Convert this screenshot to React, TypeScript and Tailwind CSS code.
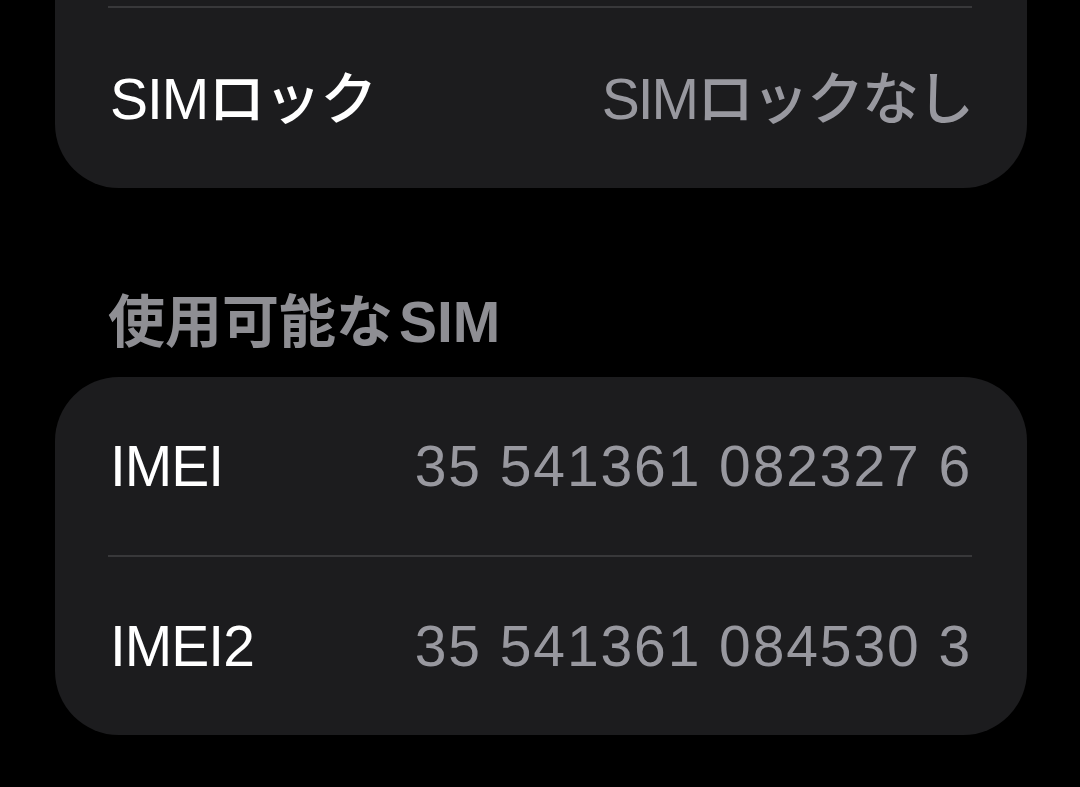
import React from "react";

const font = {
  fontFamily: '"Liberation Sans", "Noto Sans CJK JP", sans-serif',
};

function Row({
  label,
  value,
  numeric = false,
}: {
  label: string;
  value: string;
  numeric?: boolean;
}) {
  return (
    <div className="flex h-[178px] items-center justify-between pl-[55px] pr-[55px]">
      <span className="text-[57px] font-medium leading-none tracking-[-1px] text-white">
        {label}
      </span>
      <span
        className={
          numeric
            ? "text-[57px] leading-none tracking-[1.9px] text-[#98989f]"
            : "text-[57px] font-medium leading-none tracking-[-2px] text-[#98989f]"
        }
      >
        {value}
      </span>
    </div>
  );
}

function Divider() {
  return <div className="ml-[53px] mr-[55px] h-[2px] bg-[#38383a]" />;
}

export default function App() {
  return (
    <div
      className="h-[787px] w-[1080px] overflow-hidden bg-black pl-[55px] pr-[53px]"
      style={font}
    >
      <div className="-mt-[172px] rounded-[64px] bg-[#1c1c1e]">
        <div className="h-[178px]" />
        <Divider />
        <div className="pt-[2px]">
          <Row label="SIMロック" value="SIMロックなし" />
        </div>
      </div>

      <div className="mt-[100px] flex h-[68px] items-center pl-[53px]">
        <span className="text-[57px] font-bold leading-none text-[#8e8e93]">
          使用可能な<span className="ml-[6px]">SIM</span>
        </span>
      </div>

      <div className="mt-[21px] rounded-[64px] bg-[#1c1c1e]">
        <Row label="IMEI" value="35 541361 082327 6" numeric />
        <Divider />
        <Row label="IMEI2" value="35 541361 084530 3" numeric />
      </div>
    </div>
  );
}
